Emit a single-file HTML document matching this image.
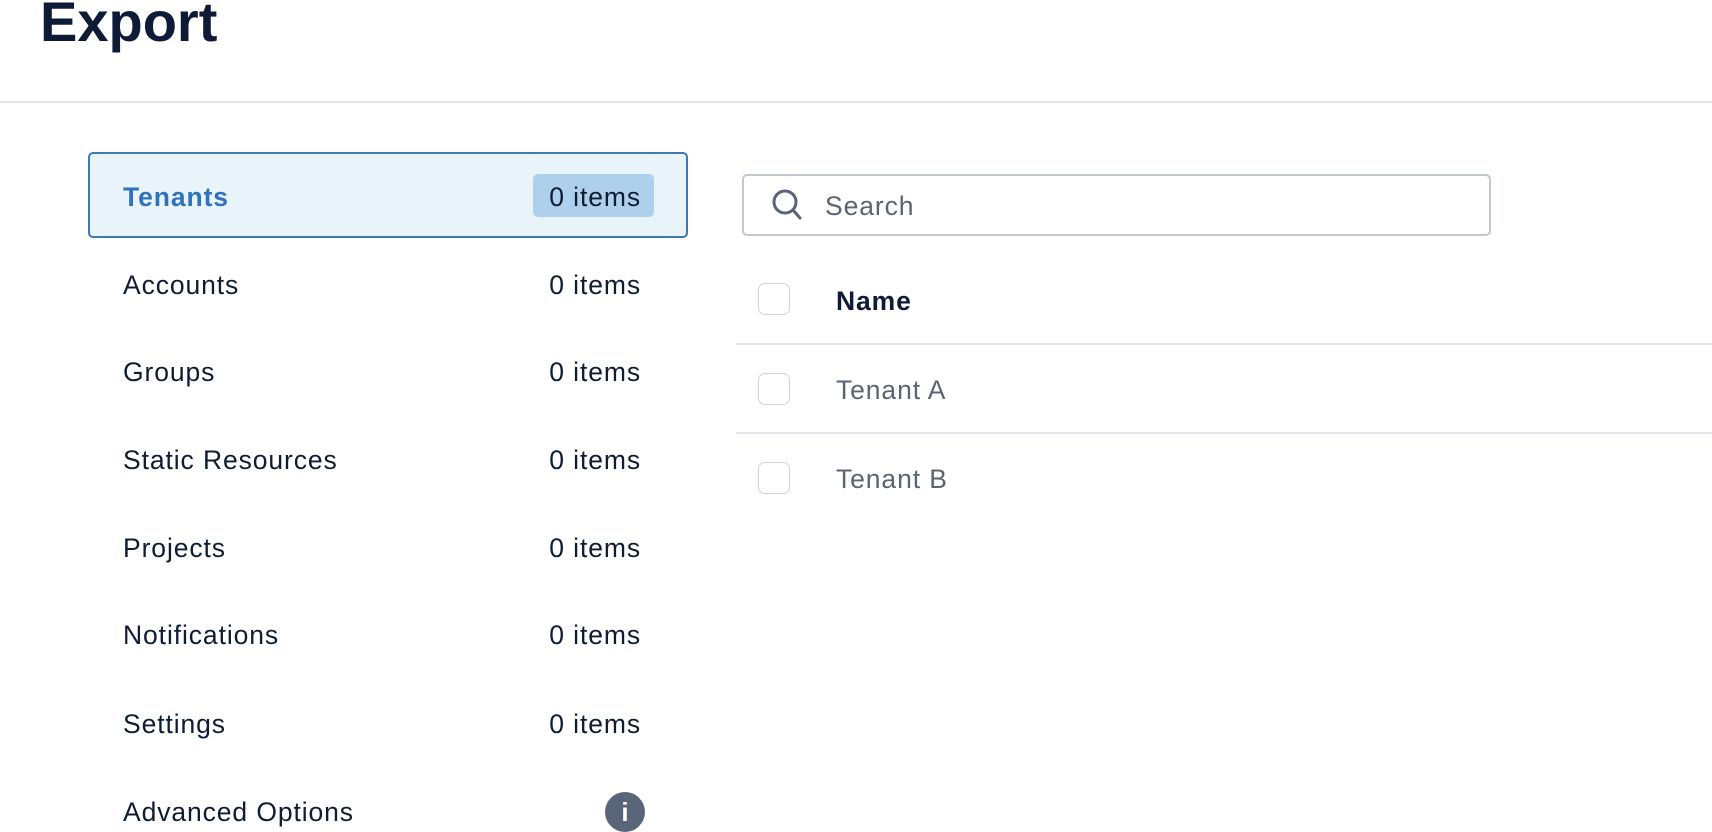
<!DOCTYPE html>
<html><head><meta charset="utf-8"><style>
*{margin:0;padding:0;box-sizing:border-box}
body{width:1712px;height:831px;overflow:hidden;background:#fff;font-family:"Liberation Sans",sans-serif;color:#0f1c33;position:relative}
.a{position:absolute}
h1{position:absolute;left:40px;top:-11px;font-size:56px;font-weight:bold;color:#0d1b36;letter-spacing:0px}
.div{left:0;top:101px;width:1712px;height:2px;background:#e1e4e8}
.box{left:88px;top:152px;width:600px;height:86px;border:2px solid #3e78b6;border-radius:5px;background:#e9f3fa}
.badge{left:533px;top:174px;width:121px;height:43px;background:#aed0ec;border-radius:5px}
.t{font-size:26.5px;line-height:30px;letter-spacing:0.9px}
.l{left:123px}
.r{right:1071px;text-align:right}
.cb{left:758px;width:32px;height:32px;border:1.5px solid #cfd3d8;border-radius:7px;background:#fff}
.hl{left:736px;right:0;height:2px;background:#e1e4e8}
</style></head><body>
<h1>Export</h1>
<div class="a div"></div>
<div class="a box"></div>
<div class="a badge"></div>
<div class="a t l" style="top:182px;color:#2f73bf;font-weight:bold">Tenants</div>
<div class="a t r" style="top:182px">0 items</div>
<div class="a t l" style="top:270px">Accounts</div><div class="a t r" style="top:270px">0 items</div>
<div class="a t l" style="top:357px">Groups</div><div class="a t r" style="top:357px">0 items</div>
<div class="a t l" style="top:445px">Static Resources</div><div class="a t r" style="top:445px">0 items</div>
<div class="a t l" style="top:533px">Projects</div><div class="a t r" style="top:533px">0 items</div>
<div class="a t l" style="top:620px">Notifications</div><div class="a t r" style="top:620px">0 items</div>
<div class="a t l" style="top:709px">Settings</div><div class="a t r" style="top:709px">0 items</div>
<div class="a t l" style="top:797px">Advanced Options</div>
<div class="a" style="left:605px;top:792px;width:40px;height:40px;border-radius:50%;background:#5a6579;color:#fff;font-weight:bold;font-size:26px;text-align:center;line-height:40px">i</div>
<div class="a" style="left:742px;top:174px;width:749px;height:62px;border:2px solid #c3c8d0;border-radius:5px"></div>
<svg class="a" style="left:770px;top:187px" width="36" height="36" viewBox="0 0 36 36"><circle cx="15" cy="15" r="11" fill="none" stroke="#5a6474" stroke-width="3"/><path d="M23 23l7 8" stroke="#5a6474" stroke-width="3" stroke-linecap="round"/></svg>
<div class="a t" style="left:825px;top:191px;color:#5a6474">Search</div>
<div class="a cb" style="top:283px"></div>
<div class="a t" style="left:836px;top:286px;font-weight:bold;color:#0d1b36">Name</div>
<div class="a hl" style="top:343px"></div>
<div class="a cb" style="top:373px"></div>
<div class="a t" style="left:836px;top:375px;color:#5a6474">Tenant A</div>
<div class="a hl" style="top:432px"></div>
<div class="a cb" style="top:462px"></div>
<div class="a t" style="left:836px;top:464px;color:#5a6474">Tenant B</div>
</body></html>
